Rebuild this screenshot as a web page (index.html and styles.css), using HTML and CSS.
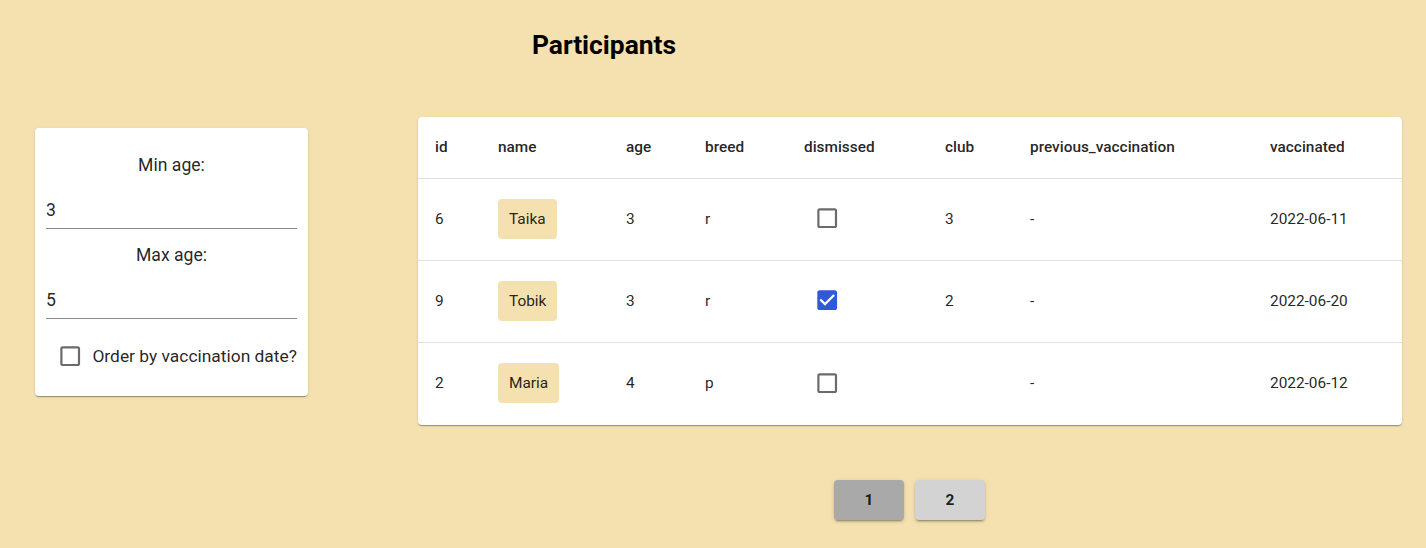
FILE: index.html
```html
<!DOCTYPE html>
<html>
<head>
<meta charset="utf-8">
<link rel="stylesheet" href="styles.css">
</head>
<body>
<header class="top">
  <h1 class="title">Participants</h1>
</header>
<main class="main">
  <section class="filters">
    <div class="label">Min age:</div>
    <div class="field"><span>3</span></div>
    <div class="label label-gap">Max age:</div>
    <div class="field"><span>5</span></div>
    <label class="order">
      <svg class="cb" viewBox="0 0 24 24"><path fill="#6b6b6b" d="M19 5v14H5V5h14m0-2H5c-1.1 0-2 .9-2 2v14c0 1.1.9 2 2 2h14c1.1 0 2-.9 2-2V5c0-1.1-.9-2-2-2z"/></svg>
      <span>Order by vaccination date?</span>
    </label>
  </section>
  <section class="table-card">
    <table class="grid">
      <colgroup>
        <col class="c-id"><col class="c-name"><col class="c-age"><col class="c-breed"><col class="c-dis"><col class="c-club"><col class="c-prev"><col class="c-vac">
      </colgroup>
      <thead>
        <tr><th>id</th><th>name</th><th>age</th><th>breed</th><th>dismissed</th><th>club</th><th>previous_vaccination</th><th>vaccinated</th></tr>
      </thead>
      <tbody>
        <tr><td>6</td><td><span class="chip">Taika</span></td><td>3</td><td>r</td><td><svg class="cb" viewBox="0 0 24 24"><path fill="#6b6b6b" d="M19 5v14H5V5h14m0-2H5c-1.1 0-2 .9-2 2v14c0 1.1.9 2 2 2h14c1.1 0 2-.9 2-2V5c0-1.1-.9-2-2-2z"/></svg></td><td>3</td><td>-</td><td>2022-06-11</td></tr>
        <tr><td>9</td><td><span class="chip">Tobik</span></td><td>3</td><td>r</td><td><svg class="cb" viewBox="0 0 24 24"><path fill="#fff" d="M5 4h14v16H5z"/><path fill="#3159d6" d="M19 3H5c-1.11 0-2 .9-2 2v14c0 1.1.89 2 2 2h14c1.11 0 2-.9 2-2V5c0-1.1-.89-2-2-2zm-9 14l-5-5 1.41-1.41L10 14.17l7.59-7.59L19 8l-9 9z"/></svg></td><td>2</td><td>-</td><td>2022-06-20</td></tr>
        <tr class="last"><td>2</td><td><span class="chip">Maria</span></td><td>4</td><td>p</td><td><svg class="cb" viewBox="0 0 24 24"><path fill="#6b6b6b" d="M19 5v14H5V5h14m0-2H5c-1.1 0-2 .9-2 2v14c0 1.1.9 2 2 2h14c1.1 0 2-.9 2-2V5c0-1.1-.9-2-2-2z"/></svg></td><td></td><td>-</td><td>2022-06-12</td></tr>
      </tbody>
    </table>
  </section>
</main>
<nav class="pager">
  <button class="page active">1</button>
  <button class="page">2</button>
</nav>
</body>
</html>
```
FILE: styles.css
```css
html, body {
  margin: 0;
  padding: 0;
}
body {
  background: #f5e1b0;
  font-family: Roboto, "Liberation Sans", sans-serif;
  color: rgba(0, 0, 0, 0.87);
  width: 1426px;
  height: 548px;
  overflow: hidden;
}
.top {
  width: 1208px;
  padding-top: 28px;
  text-align: center;
}
.title {
  margin: 0;
  font-size: 26.4px;
  line-height: 34px;
  font-weight: 700;
  color: #000;
}
.main {
  display: flex;
  align-items: flex-start;
  padding-left: 35px;
  margin-top: 55px;
}
.filters {
  margin-top: 11px;
  width: 251px;
  padding: 25px 11px 27px;
  background: #fff;
  border-radius: 4px;
  box-shadow: 0 2px 1px -1px rgba(0,0,0,0.2), 0 1px 1px 0 rgba(0,0,0,0.14), 0 1px 3px 0 rgba(0,0,0,0.12);
  display: flex;
  flex-direction: column;
  font-size: 17.6px;
}
.label {
  text-align: center;
  line-height: 24px;
  font-size: 17.6px;
}
.label-gap {
  margin-top: 14px;
}
.field {
  padding-top: 21px;
  padding-bottom: 6px;
  line-height: 24px;
  font-size: 17.6px;
  border-bottom: 1px solid #8a8a8a;
}
.order {
  margin-top: 24px;
  height: 26px;
  display: flex;
  align-items: center;
  gap: 9px;
  padding-left: 11px;
  line-height: 24px;
  font-size: 17.4px;
  white-space: nowrap;
}
.cb {
  display: block;
  width: 26.4px;
  height: 26.4px;
  flex: none;
}
.table-card {
  margin-left: 110px;
  width: 984px;
  background: #fff;
  border-radius: 4px;
  box-shadow: 0 2px 1px -1px rgba(0,0,0,0.2), 0 1px 1px 0 rgba(0,0,0,0.14), 0 1px 3px 0 rgba(0,0,0,0.12);
  overflow: hidden;
}
.grid {
  width: 100%;
  border-collapse: collapse;
  table-layout: fixed;
  font-size: 15.4px;
}
.c-id { width: 64px; }
.c-name { width: 128px; }
.c-age { width: 79px; }
.c-breed { width: 99px; }
.c-dis { width: 141px; }
.c-club { width: 85px; }
.c-prev { width: 240px; }
.c-vac { width: 148px; }
.grid th, .grid td {
  text-align: left;
  padding: 0 0 2px 16px;
  border-bottom: 1px solid #e0e0e0;
  line-height: 22px;
}
.grid th:first-child, .grid td:first-child {
  padding-left: 17px;
}
.grid th {
  height: 59px;
  font-weight: 500;
}
.grid td {
  height: 79px;
  font-weight: 400;
}
.grid tr.last td {
  border-bottom: none;
  height: 80px;
}
.grid td .cb {
  margin-left: 10px;
}
.chip {
  display: inline-flex;
  align-items: center;
  height: 40px;
  padding: 0 11px;
  background: #f5e1b0;
  border-radius: 4px;
}
.pager {
  display: flex;
  gap: 11px;
  padding-left: 834px;
  margin-top: 55px;
}
.page {
  width: 70px;
  height: 40px;
  border: none;
  border-radius: 4px;
  font-family: Roboto, "Liberation Sans", sans-serif;
  font-weight: 700;
  font-size: 15.4px;
  color: rgba(0,0,0,0.87);
  background: #d3d3d3;
  box-shadow: 0 3px 1px -2px rgba(0,0,0,0.2), 0 2px 2px 0 rgba(0,0,0,0.14), 0 1px 5px 0 rgba(0,0,0,0.12);
  padding: 0;
}
.page.active {
  background: #a9a9a9;
}
```
